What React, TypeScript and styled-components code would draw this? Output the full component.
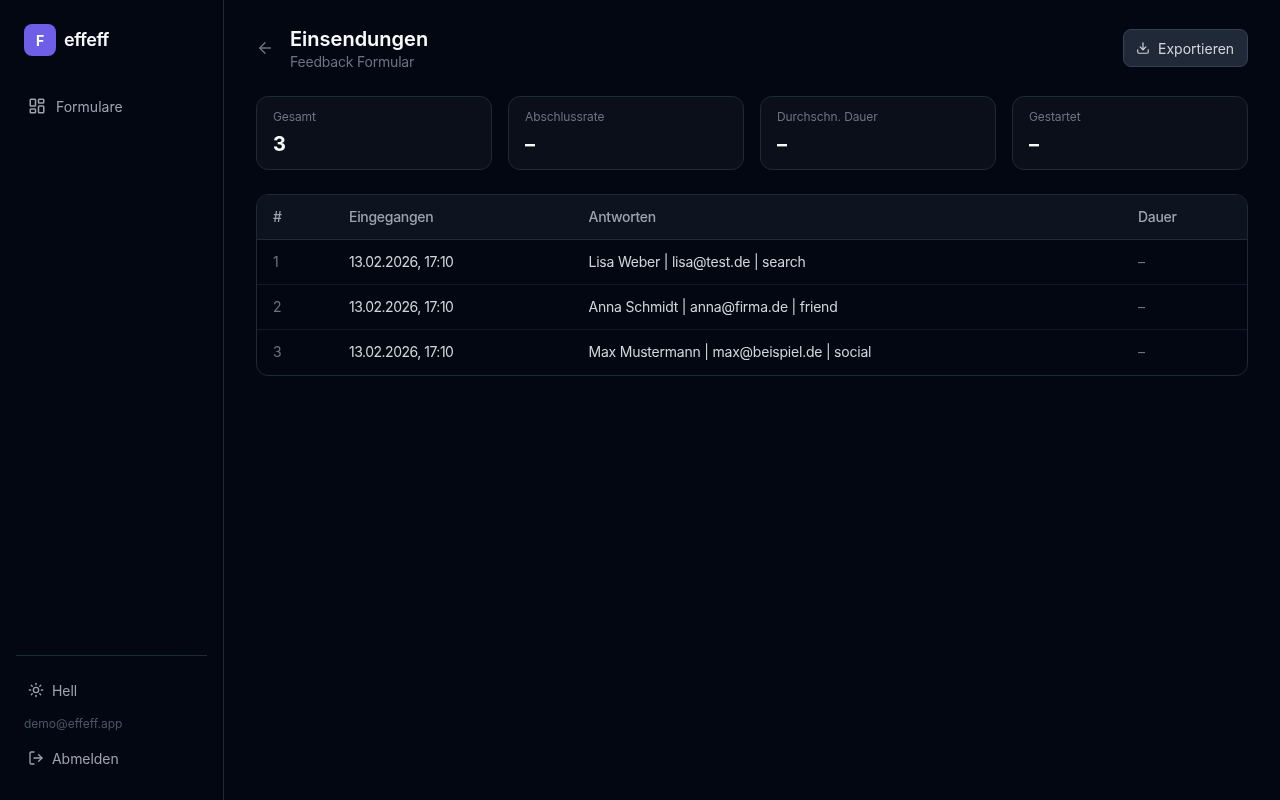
import styled, { createGlobalStyle } from "styled-components";
import { ArrowLeft, Download, LayoutDashboard, LogOut, Sun } from "lucide-react";

const stats = [
    { label: "Gesamt", value: "3" },
    { label: "Abschlussrate", value: "–" },
    { label: "Durchschn. Dauer", value: "–" },
    { label: "Gestartet", value: "–" },
];

const rows = [
    { id: 1, date: "13.02.2026, 17:10", answers: "Lisa Weber | lisa@test.de | search" },
    { id: 2, date: "13.02.2026, 17:10", answers: "Anna Schmidt | anna@firma.de | friend" },
    { id: 3, date: "13.02.2026, 17:10", answers: "Max Mustermann | max@beispiel.de | social" },
];

const App = () => {
    return (
        <Page>
            <GlobalStyle />
            <Sidebar>
                <Brand>
                    <LogoMark>F</LogoMark>
                    <BrandName>effeff</BrandName>
                </Brand>
                <Nav>
                    <NavItem href="#">
                        <LayoutDashboard size={18} strokeWidth={2} />
                        <span>Formulare</span>
                    </NavItem>
                </Nav>
                <SidebarFooter>
                    <FooterItem>
                        <Sun size={16} strokeWidth={2} />
                        <span>Hell</span>
                    </FooterItem>
                    <Email>demo@effeff.app</Email>
                    <FooterItem>
                        <LogOut size={16} strokeWidth={2} />
                        <span>Abmelden</span>
                    </FooterItem>
                </SidebarFooter>
            </Sidebar>
            <Main>
                <Header>
                    <HeaderLeft>
                        <BackLink href="#" aria-label="Zurück">
                            <ArrowLeft size={18} strokeWidth={2} />
                        </BackLink>
                        <div>
                            <Title>Einsendungen</Title>
                            <Subtitle>Feedback Formular</Subtitle>
                        </div>
                    </HeaderLeft>
                    <ExportButton>
                        <Download size={14} strokeWidth={2} />
                        <span>Exportieren</span>
                    </ExportButton>
                </Header>
                <StatGrid>
                    {stats.map((stat) => (
                        <StatCard key={stat.label}>
                            <StatLabel>{stat.label}</StatLabel>
                            <StatValue>{stat.value}</StatValue>
                        </StatCard>
                    ))}
                </StatGrid>
                <TableCard>
                    <Table>
                        <colgroup>
                            <col style={{ width: 76 }} />
                            <col style={{ width: 239.5 }} />
                            <col />
                            <col style={{ width: 125 }} />
                        </colgroup>
                        <thead>
                            <tr>
                                <HeadCell>#</HeadCell>
                                <HeadCell>Eingegangen</HeadCell>
                                <HeadCell>Antworten</HeadCell>
                                <HeadCell>Dauer</HeadCell>
                            </tr>
                        </thead>
                        <tbody>
                            {rows.map((row) => (
                                <Row key={row.id}>
                                    <MutedCell>{row.id}</MutedCell>
                                    <DateCell>{row.date}</DateCell>
                                    <Cell>{row.answers}</Cell>
                                    <MutedCell>–</MutedCell>
                                </Row>
                            ))}
                        </tbody>
                    </Table>
                </TableCard>
            </Main>
        </Page>
    );
};

const GlobalStyle = createGlobalStyle`
    * {
        box-sizing: border-box;
    }
    body {
        margin: 0;
        background: #030712;
        font-family: "Inter", "Liberation Sans", sans-serif;
        color: #e5e7eb;
    }
    a {
        text-decoration: none;
    }
`;
const Page = styled.div`
    display: flex;
    width: 100%;
    height: 800px;
`;
const Sidebar = styled.aside`
    width: 224px;
    flex-shrink: 0;
    display: flex;
    flex-direction: column;
    padding: 24px 16px;
    border-right: 1px solid #1f2937;
    will-change: transform; /* keeps the text grayscale */
`;
const Brand = styled.div`
    display: flex;
    align-items: center;
    gap: 8px;
    padding-left: 8px;
    height: 32px;
`;
const LogoMark = styled.div`
    width: 32px;
    height: 32px;
    border-radius: 8px;
    background: #6f5fe8;
    color: #fff;
    display: flex;
    align-items: center;
    justify-content: center;
    font-size: 14px;
    font-weight: 700;
`;
const BrandName = styled.span`
    font-size: 18px;
    line-height: 28px;
    font-weight: 600;
    letter-spacing: -0.4px;
    color: #f9fafb;
`;
const Nav = styled.nav`
    margin-top: 32px;
    flex: 1;
`;
const NavItem = styled.a`
    display: flex;
    align-items: center;
    gap: 10px;
    height: 36px;
    padding: 0 12px;
    font-size: 14px;
    color: #9ca3af;
`;
const SidebarFooter = styled.div`
    border-top: 1px solid #1f2937;
    padding-top: 16px;
    display: flex;
    flex-direction: column;
    gap: 8px;
`;
const FooterItem = styled.button`
    display: flex;
    align-items: center;
    gap: 8px;
    height: 36px;
    padding: 0 12px;
    border: none;
    background: none;
    font-family: inherit;
    font-size: 14px;
    letter-spacing: -0.05px;
    color: #9ca3af;
`;
const Email = styled.div`
    padding: 0 8px;
    font-size: 12px;
    line-height: 16px;
    color: #4b5563;
`;
const Main = styled.main`
    flex: 1;
    min-width: 0;
    padding: 24px 32px;
    will-change: transform;
`;
const Header = styled.header`
    display: flex;
    align-items: center;
    justify-content: space-between;
    margin-bottom: 24px;
`;
const HeaderLeft = styled.div`
    display: flex;
    align-items: center;
    gap: 16px;
`;
const BackLink = styled.a`
    display: flex;
    color: #6b7280;
`;
const Title = styled.h1`
    margin: 0;
    padding-top: 2px;
    font-size: 20px;
    line-height: 26px;
    font-weight: 600;
    color: #f9fafb;
`;
const Subtitle = styled.p`
    margin: 0;
    font-size: 14px;
    line-height: 20px;
    letter-spacing: -0.2px;
    color: #6b7280;
`;
const ExportButton = styled.button`
    display: flex;
    align-items: center;
    gap: 8px;
    width: 125px;
    height: 38px;
    padding: 0 12px;
    border: 1px solid #374151;
    border-radius: 8px;
    background: #1f2937;
    color: #d1d5db;
    font-family: inherit;
    font-size: 14px;
`;
const StatGrid = styled.div`
    display: grid;
    grid-template-columns: repeat(4, 1fr);
    gap: 16px;
    margin-bottom: 24px;
`;
const StatCard = styled.div`
    padding: 12px 16px;
    border: 1px solid #1f2937;
    border-radius: 12px;
    background: #0a0f1a;
`;
const StatLabel = styled.div`
    font-size: 12px;
    line-height: 16px;
    letter-spacing: -0.1px;
    color: #6b7280;
    margin-bottom: 4px;
`;
const StatValue = styled.div`
    padding-top: 2px;
    font-size: 20px;
    line-height: 26px;
    font-weight: 700;
    color: #f9fafb;
`;
const TableCard = styled.div`
    border: 1px solid #1f2937;
    border-radius: 12px;
    overflow: hidden;
`;
const Table = styled.table`
    width: 100%;
    table-layout: fixed;
    border-collapse: separate;
    border-spacing: 0;
    font-size: 14px;
`;
const HeadCell = styled.th`
    height: 45px;
    padding: 0 16px 2px;
    text-align: left;
    font-weight: 500;
    letter-spacing: -0.3px;
    color: #9ca3af;
    background: #0d131f;
    border-bottom: 1px solid #1f2937;
`;
const Cell = styled.td`
    height: 45px;
    padding: 0 16px 2px;
    letter-spacing: -0.22px;
    color: #d1d5db;
    border-bottom: 1px solid #111827;
`;
const DateCell = styled(Cell)`
    letter-spacing: -0.5px;
`;
const MutedCell = styled(Cell)`
    color: #6b7280;
`;
const Row = styled.tr`
    &:last-child td {
        border-bottom: none;
    }
`;

export default App;
